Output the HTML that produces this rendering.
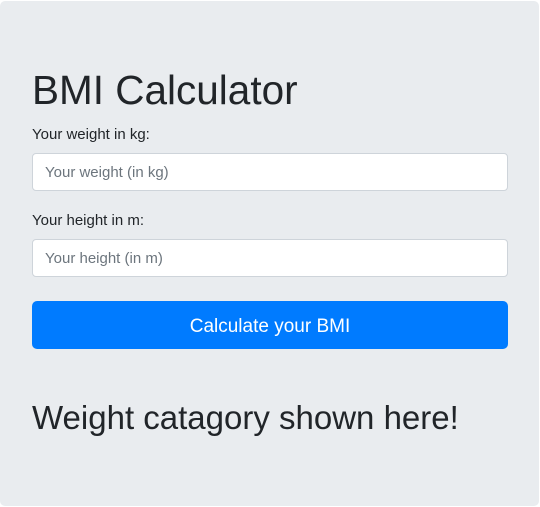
<!DOCTYPE html>
<html><head><style>
body{margin:0;background:#fff;font-family:"Liberation Sans",sans-serif;color:#212529;}
.j{position:absolute;left:0;top:1px;width:539px;height:505px;background:#e9ecef;border-radius:5px;}
.a{position:absolute;left:32px;white-space:nowrap;}
h1{margin:0;font-weight:500;font-size:40.5px;}
h2{margin:0;font-weight:500;font-size:33px;}
.lab{font-size:15px;}
.in{position:absolute;left:32px;width:474px;height:36px;background:#fff;border:1px solid #ced4da;border-radius:4px;font-size:15px;color:#6c757d;line-height:38px;text-indent:12px;}
.btn{position:absolute;left:32px;top:301px;width:476px;height:48px;background:#007bff;border-radius:5px;color:#fff;font-size:19px;line-height:52px;text-align:center;}
</style></head><body>
<div class="j"></div>
<h1 class="a" style="top:67px">BMI Calculator</h1>
<div class="a lab" style="top:126px">Your weight in kg:</div>
<div class="in" style="top:153px">Your weight (in kg)</div>
<div class="a lab" style="top:212px">Your height in m:</div>
<div class="in" style="top:239px">Your height (in m)</div>
<div class="btn">Calculate your BMI</div>
<h2 class="a" style="top:399px">Weight catagory shown here!</h2>
</body></html>
